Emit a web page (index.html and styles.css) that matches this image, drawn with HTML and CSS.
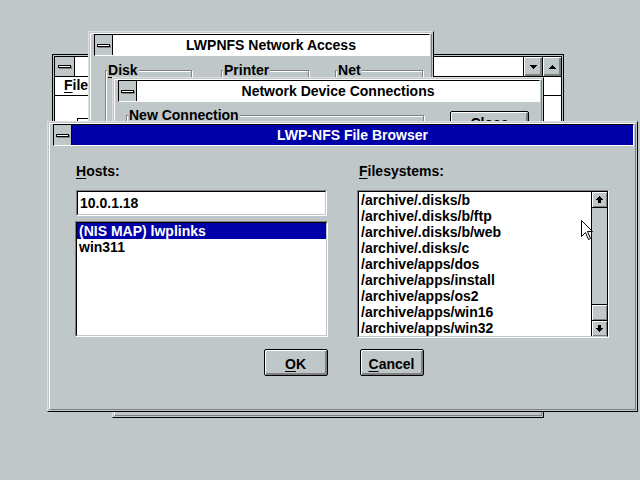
FILE: index.html
```html
<!DOCTYPE html>
<html lang="en">
<head>
<meta charset="utf-8">
<title>LWP-NFS File Browser</title>
<link rel="stylesheet" href="styles.css">
</head>
<body>

<div class="win w1">
  <div class="win-in">
    <div class="tbar">
      <div class="sysbox sysbox-w1"><span class="sysdash"></span></div>
      <div class="ttl"></div>
      <div class="tbtn"><svg width="7" height="4" viewBox="0 0 7 4" shape-rendering="crispEdges"><rect x="0" y="0" width="7" height="1"/><rect x="1" y="1" width="5" height="1"/><rect x="2" y="2" width="3" height="1"/><rect x="3" y="3" width="1" height="1"/></svg></div>
      <div class="tbtn"><svg width="7" height="4" viewBox="0 0 7 4" shape-rendering="crispEdges"><rect x="3" y="0" width="1" height="1"/><rect x="2" y="1" width="3" height="1"/><rect x="1" y="2" width="5" height="1"/><rect x="0" y="3" width="7" height="1"/></svg></div>
    </div>
    <div class="menubar"><span><u>F</u>ile</span></div>
    <div class="client"><div class="client-ctl"></div></div>
  </div>
</div>

<div class="dlg w2">
  <div class="dlg-in">
    <div class="tbar dtbar">
      <div class="sysbox"><span class="sysdash"></span></div>
      <div class="ttl">LWPNFS Network Access</div>
    </div>
    <div class="w2-body">
      <div class="grp g-disk"><div class="grp-lbl"><u>D</u>isk</div></div>
      <div class="grp g-prn"><div class="grp-lbl"><u>P</u>rinter</div></div>
      <div class="grp g-net"><div class="grp-lbl"><u>N</u>et</div></div>
    </div>
  </div>
</div>

<div class="dlg w3">
  <div class="dlg-in">
    <div class="tbar dtbar">
      <div class="sysbox"><span class="sysdash"></span></div>
      <div class="ttl">Network Device Connections</div>
    </div>
    <div class="w3-body">
      <div class="grp g-new"><div class="grp-lbl">New Connection</div></div>
      <div class="btn btn-close"><span>Close</span></div>
    </div>
  </div>
</div>

<div class="dlg main">
  <div class="dlg-in">
    <div class="tbar dtbar active">
      <div class="sysbox"><span class="sysdash"></span></div>
      <div class="ttl">LWP-NFS File Browser</div>
    </div>
    <div class="main-body">
      <div class="cols">
        <div class="col col-hosts">
          <div class="lbl lbl-hosts"><u>H</u>osts:</div>
          <div class="sunk edit-wrap"><div class="edit">10.0.1.18</div></div>
          <div class="sunk hosts-wrap">
            <div class="lb">
              <div class="item sel">(NIS MAP) lwplinks</div>
              <div class="item">win311</div>
            </div>
          </div>
        </div>
        <div class="col col-fs">
          <div class="lbl lbl-fs"><u>F</u>ilesystems:</div>
          <div class="sunk fs-wrap">
            <div class="lb lb-fs">
              <div class="items">
                <div class="item">/archive/.disks/b</div>
                <div class="item">/archive/.disks/b/ftp</div>
                <div class="item">/archive/.disks/b/web</div>
                <div class="item">/archive/.disks/c</div>
                <div class="item">/archive/apps/dos</div>
                <div class="item">/archive/apps/install</div>
                <div class="item">/archive/apps/os2</div>
                <div class="item">/archive/apps/win16</div>
                <div class="item">/archive/apps/win32</div>
              </div>
              <div class="sb">
                <div class="sb-btn sb-up"><svg width="7" height="7" viewBox="0 0 7 7" shape-rendering="crispEdges"><rect x="3" y="0" width="1" height="1"/><rect x="2" y="1" width="3" height="1"/><rect x="1" y="2" width="5" height="1"/><rect x="0" y="3" width="7" height="1"/><rect x="2" y="4" width="3" height="3"/></svg></div>
                <div class="sb-track"></div>
                <div class="sb-btn sb-thumb"></div>
                <div class="sb-btn sb-down"><svg width="7" height="7" viewBox="0 0 7 7" shape-rendering="crispEdges"><rect x="2" y="0" width="3" height="3"/><rect x="0" y="3" width="7" height="1"/><rect x="1" y="4" width="5" height="1"/><rect x="2" y="5" width="3" height="1"/><rect x="3" y="6" width="1" height="1"/></svg></div>
              </div>
            </div>
          </div>
        </div>
      </div>
      <div class="btnrow">
        <div class="btn btn-dlg"><span><u>O</u>K</span></div>
        <div class="btn btn-dlg"><span><u>C</u>ancel</span></div>
      </div>
    </div>
  </div>
</div>

<svg class="cursor" width="13" height="21" viewBox="0 0 13 21"><polygon points="0.5,0.5 0.5,16.5 4.5,12.5 7.5,19.5 9.5,18.5 6.5,11.5 11.5,11.5" fill="#fff" stroke="#000" stroke-width="1"/></svg>

</body>
</html>
```

FILE: styles.css
```css
* { box-sizing: border-box; }
html, body { margin: 0; padding: 0; }
body {
  width: 640px;
  height: 480px;
  overflow: hidden;
  background: #c0c7c8;
  color: #000;
  font-family: "Liberation Sans", Arial, sans-serif;
  font-weight: bold;
  font-size: 14px;
  line-height: 16px;
}
u { text-decoration: underline; text-decoration-thickness: 1px; text-underline-offset: 2px; }

/* ---------- resizable window (back) ---------- */
.win {
  position: absolute;
  background: #c0c7c8;
  border: 1px solid #000;
  padding: 1px;
}
.win-in {
  height: 100%;
  border: 1px solid #000;
  background: #fff;
  display: flex;
  flex-direction: column;
}
.w1 { left: 52px; top: 54px; width: 512px; height: 300px; }

.tbar {
  flex: none;
  display: flex;
  height: 20px;
  border-bottom: 1px solid #000;
  background: #fff;
}
.sysbox {
  flex: none;
  width: 18px;
  border-right: 1px solid #000;
  background: #c0c7c8;
  display: flex;
  align-items: center;
  justify-content: center;
}
.sysbox-w1 { width: 20px; }
.sysdash {
  width: 13px;
  height: 3px;
  background: #fff;
  border: 1px solid #000;
  box-shadow: 1px 1px 0 #808080;
}
.ttl {
  flex: 1;
  text-align: center;
  line-height: 20px;
  white-space: nowrap;
  overflow: hidden;
}
.tbtn {
  flex: none;
  width: 19px;
  border-left: 1px solid #000;
  background: #c0c7c8;
  box-shadow: inset 1px 1px 0 #fff, inset -2px -2px 0 #808080;
  display: flex;
  align-items: center;
  justify-content: center;
}
.menubar {
  flex: none;
  height: 19px;
  border-bottom: 1px solid #000;
  padding-left: 9px;
  background: #fff;
}
.client { flex: 1; background: #fff; padding: 22px 0 0 22px; }
.client-ctl { width: 120px; height: 60px; border-top: 1px solid #000; border-left: 1px solid #000; }

/* ---------- dialog frames ---------- */
.dlg {
  position: absolute;
  background: #c0c7c8;
  border: 1px solid;
  border-color: #dfdfdf #000 #000 #dfdfdf;
  padding: 1px;
}
.dlg-in {
  height: 100%;
  border: 1px solid;
  border-color: #fff #808080 #808080 #fff;
  padding: 0 1px 2px 3px;
  display: flex;
  flex-direction: column;
}
.dtbar {
  height: 22px;
  border: 1px solid;
  border-color: #000 #fff #fff #000;
}
.active .ttl { background: #0000a8; color: #fff; }

.w2 { left: 88px; top: 31px; width: 346px; height: 300px; }
.w3 { left: 112px; top: 77px; width: 432px; height: 341px; }
.main { left: 47px; top: 121px; width: 591px; height: 291px; }

/* group boxes */
.grp {
  flex: none;
  height: 70px;
  border: 1px solid #808080;
  box-shadow: inset 1px 1px 0 #fff, 1px 1px 0 #fff;
  padding-left: 1px;
}
.grp-lbl {
  width: fit-content;
  margin-top: -9px;
  padding: 0 1px;
  background: #c0c7c8;
  line-height: 16px;
  white-space: nowrap;
}
.w2-body { display: flex; padding: 14px 0 0 11px; }
.g-disk { width: 87px; }
.g-prn { width: 88px; margin-left: 29px; }
.g-net { width: 88px; margin-left: 26px; }

.w3-body { display: flex; align-items: flex-start; padding: 9px 0 0 8px; }
.g-new { width: 298px; height: 120px; margin-top: 4px; }

/* buttons */
.btn {
  flex: none;
  border: 1px solid #000;
  border-radius: 2px;
  background: #c0c7c8;
  box-shadow: inset 1px 1px 0 #fff, inset -2px -2px 0 #808080;
  display: flex;
  justify-content: center;
  align-items: center;
  padding-top: 2px;
  white-space: nowrap;
}
.btn-dlg { width: 64px; height: 27px; }
.btn-close { width: 79px; height: 27px; margin-left: 26px; align-items: flex-start; padding-top: 3px; }

/* ---------- main dialog body ---------- */
.main-body { display: flex; flex-direction: column; padding-top: 17px; }
.cols { display: flex; gap: 29px; padding-left: 22px; }
.col { display: flex; flex-direction: column; }
.col-hosts { width: 253px; }
.col-fs { width: 252px; }
.lbl { height: 16px; margin-bottom: 11px; }
.lbl-hosts { padding-left: 1px; }
.lbl-fs { padding-left: 2px; }

.sunk {
  border: 1px solid;
  border-color: #808080 #fff #fff #808080;
}
.edit-wrap { width: 251px; height: 26px; margin-left: 1px; }
.edit {
  height: 100%;
  border: 1px solid;
  border-color: #000 #c0c7c8 #c0c7c8 #000;
  background: #fff;
  padding: 3px 2px;
  white-space: nowrap;
}
.hosts-wrap { height: 116px; margin-top: 5px; }
.fs-wrap { height: 148px; }
.lb {
  height: 100%;
  border: 1px solid;
  border-color: #000 #c0c7c8 #c0c7c8 #000;
  background: #fff;
}
.lb-fs { display: flex; border-right-color: #000; }
.items { flex: 1; overflow: hidden; }
.item { height: 16px; padding-left: 2px; white-space: nowrap; }
.item.sel { background: #0000a8; color: #fff; }

/* scrollbar */
.sb {
  flex: none;
  width: 16px;
  border-left: 1px solid #000;
  background: #c0c7c8;
  display: flex;
  flex-direction: column;
}
.sb-btn {
  flex: none;
  height: 16px;
  background: #c0c7c8;
  box-shadow: inset 1px 1px 0 #fff, inset -1px -1px 0 #808080;
  display: flex;
  align-items: center;
  justify-content: center;
}
.sb-up { border-bottom: 1px solid #000; }
.sb-thumb { border-top: 1px solid #000; }
.sb-down { border-top: 1px solid #000; }
.sb-track { flex: 1; }

.btnrow { display: flex; justify-content: center; gap: 32px; margin-top: 11px; }

.cursor { position: absolute; left: 581px; top: 220px; }
```
